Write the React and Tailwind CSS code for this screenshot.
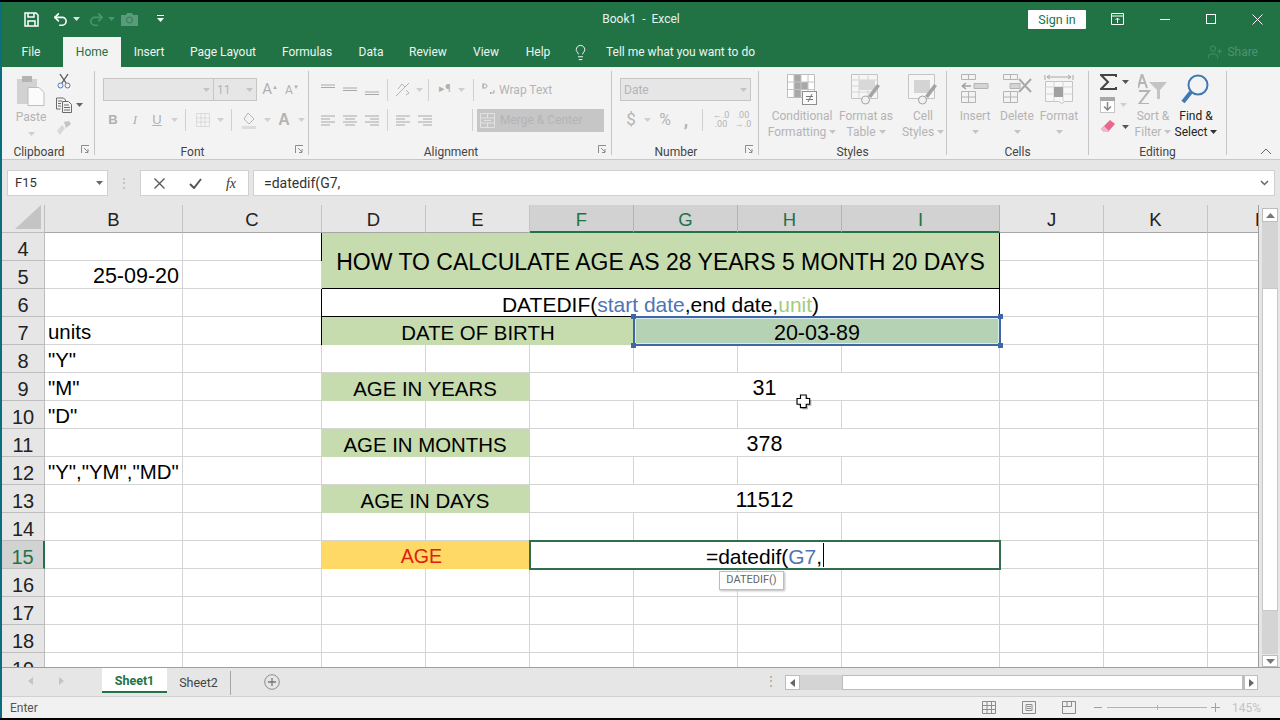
import React from "react";
import { Undo2, Redo2, Lightbulb, UserPlus } from "lucide-react";

const UI = "font-['Roboto',sans-serif]";

const Caret = ({ c = "#b9b9b9" }) => (
  <svg width="7" height="4" viewBox="0 0 7 4" className="shrink-0"><path d="M0 0h7L3.5 4z" fill={c} /></svg>
);

const Launcher = () => (
  <svg width="9" height="9" viewBox="0 0 9 9" className="shrink-0 ml-[5px] mr-[4px] mt-[2px]">
    <path d="M.5 8V.5H8M3 3l4 4M7 4v3.5H4" fill="none" stroke="#8c8c8c" />
  </svg>
);

const Slot = ({ w, children, className = "" }) => (
  <div style={{ width: w }} className={`flex items-center justify-center shrink-0 ${className}`}>{children}</div>
);

const Sep = ({ h = 22 }) => <div style={{ height: h }} className="w-px bg-[#d0d0d0] shrink-0" />;

const Lines = ({ kind, stroke = "#a8a8a8" }) => {
  const rows = {
    top: ["M1 3h14", "M1 5.5h14", "", ""],
    mid: ["M1 6h14", "M1 8.5h14", "", ""],
    bot: ["M1 10h14", "M1 12.5h14", "", ""],
    l: ["M1 3h14", "M1 6h9", "M1 9h14", "M1 12h9"],
    c: ["M1 3h14", "M3 6h10", "M1 9h14", "M3 12h10"],
    r: ["M1 3h14", "M6 6h9", "M1 9h14", "M6 12h9"],
  }[kind];
  return (
    <svg width="16" height="15" viewBox="0 0 16 15">
      {rows.map((d, i) => d && <path key={i} d={d} stroke={stroke} fill="none" />)}
    </svg>
  );
};

function Group({ w, label, launcher, children, border = true }) {
  return (
    <div style={{ width: w }} className={`h-[84px] flex flex-col shrink-0 ${border ? "border-r border-[#c6c6c6]" : ""}`}>
      <div className="h-[72px] flex">{children}</div>
      <div className="h-[12px] flex items-start">
        <span className="flex-1 text-center text-[12px] leading-[18px] text-[#444]">{label}</span>
        {launcher ? <Launcher /> : null}
      </div>
    </div>
  );
}

const BigBtn = ({ w, l1, l2, icon, dark }) => (
  <div style={{ width: w }} className="flex flex-col items-center shrink-0">
    <div className="h-[36px] pt-[3px] flex justify-center">{icon}</div>
    <div className={`mt-[1px] text-[12px] leading-[16px] whitespace-nowrap ${dark ? "text-[#222]" : "text-[#b4b4b4]"}`}>{l1}</div>
    <div className={`text-[12px] leading-[16px] h-[16px] flex items-center gap-[3px] whitespace-nowrap ${dark ? "text-[#222]" : "text-[#b4b4b4]"}`}>
      {l2}<Caret c={dark ? "#333" : "#c4c4c4"} />
    </div>
  </div>
);

const TableBase = ({ children }) => (
  <svg width="30" height="32" viewBox="0 0 30 32">{children}</svg>
);

const CondIcon = () => (
  <TableBase>
    <path d="M.5.5h27v23H.5z" fill="#fff" stroke="#bdbdbd" />
    <path d="M7 1h7v7h7v7h-7v8H7z" fill="#a8a8a8" />
    <path d="M.5 8h27M.5 15.5h27M7 .5v23M14 .5v23M21 .5v23" stroke="#c4c4c4" fill="none" />
    <rect x="15.5" y="17.5" width="14" height="13" fill="#fbfbfb" stroke="#8f8f8f" />
    <path d="M19 22.5h7M19 25.5h7M25 20l-4 8" stroke="#777" fill="none" />
  </TableBase>
);
const FmtTableIcon = () => (
  <TableBase>
    <path d="M.5.5h26v24H.5z" fill="#f6f6f6" stroke="#c4c4c4" />
    <path d="M.5 6h26M.5 12h26M.5 18h26M8 .5v24M17 .5v24" stroke="#d4d4d4" fill="none" />
    <path d="M8 6h16v10H8z" fill="#d8d8d8" />
    <path d="M29 12L20 24l-3-2 9-12z" fill="#a4a4a4" />
    <circle cx="14.5" cy="26" r="4" fill="#f1f1f1" stroke="#a4a4a4" />
  </TableBase>
);
const CellStyleIcon = () => (
  <TableBase>
    <path d="M.5.5h26v24H.5z" fill="#f6f6f6" stroke="#c4c4c4" />
    <path d="M6 6h16v13H6z" fill="#d4d4d4" />
    <path d="M29 12L20 24l-3-2 9-12z" fill="#a4a4a4" />
    <circle cx="14.5" cy="26" r="4" fill="#f1f1f1" stroke="#a4a4a4" />
  </TableBase>
);
const InsertIcon = () => (
  <TableBase>
    <path d="M1.5.5h14v5h-14zM8.5.5v5M1.5 17.5h14v11h-14zM1.5 23h14M8.5 17.5v11" fill="none" stroke="#b4b4b4" />
    <path d="M14 9.5h14v5H14z" fill="#d4d4d4" stroke="#b4b4b4" />
    <path d="M2 12h9M2 12l4-3M2 12l4 3" fill="none" stroke="#a0a0a0" strokeWidth="1.5" />
  </TableBase>
);
const DeleteIcon = () => (
  <TableBase>
    <path d="M1.5.5h14v5h-14zM8.5.5v5M1.5 17.5h14v11h-14zM1.5 23h14M8.5 17.5v11" fill="none" stroke="#b4b4b4" />
    <path d="M8 9.5h10v5H8z" fill="#d4d4d4" stroke="#b4b4b4" />
    <path d="M17 5l12 13M29 5L17 18" fill="none" stroke="#a8a8a8" strokeWidth="2" />
  </TableBase>
);
const FormatIcon = () => (
  <svg width="30" height="32" viewBox="0 0 30 32">
    <path d="M1 1v5M29 1v5M3 3h24M3 3l3-2M3 3l3 2M27 3l-3-2M27 3l-3 2" stroke="#a8a8a8" fill="none" />
    <path d="M1.5 7.5h27v20h-8l-2 2-4-2h-13z" fill="#f7f7f7" stroke="#c4c4c4" />
    <path d="M1.5 13h27M1.5 20h27M10 7.5v20M19 7.5v20" stroke="#d4d4d4" fill="none" />
    <rect x="10" y="13" width="9" height="10" fill="#a0a0a0" />
  </svg>
);

const Sheet = () => {
  const g = "border-r border-b border-[#d4d4d4]";
  const txt = "flex items-center pt-[4px] whitespace-nowrap overflow-visible text-black";
  const T = "text-[20.4px]";
  const N = "text-[21.5px]";
  const hCell = (n) => (
    <div key={"h" + n} className={`flex items-center justify-center pt-[4px] border-r border-b text-[20px] ${n === 15 ? "bg-[#d2d2d2] text-[#217346] border-[#bdbdbd] border-r-[#217346] border-r-2" : "bg-[#e6e6e6] text-[#222] border-[#bdbdbd]"}`}>{n}</div>
  );
  const e = (k) => <div key={k} className={g} />;
  const es = (p, n) => Array.from({ length: n }, (_, i) => e(p + i));
  const B = (k, t, right) => <div key={k} className={`${g} ${txt} ${right ? `justify-end pr-[3px] ${N}` : `pl-[3px] ${T}`}`}>{t}</div>;
  const greenC = "bg-[#c6dbae]";
  const side = (n) => [e("j" + n), e("k" + n), <div key={"l" + n} className="border-b border-[#d4d4d4]" />];
  const labelRow = (n, label, value) => [
    hCell(n), e("b" + n), e("c" + n),
    <div key={"d" + n} className={`col-span-2 ${greenC} ${txt} ${T} justify-center pr-[2px]`}>{label}</div>,
    <div key={"f" + n} className={`col-span-4 ${g} ${txt} ${N} justify-center`}>{value}</div>,
    ...side(n),
  ];
  const heads = ["B", "C", "D", "E", "F", "G", "H", "I", "J", "K"];
  return (
    <div className="relative h-[462px] w-[1256px] overflow-hidden bg-white font-['Liberation_Sans',sans-serif]">
      <div className="grid grid-cols-[43px_138px_139px_104px_104px_104px_104px_104px_158px_104px_104px_50px] auto-rows-[28px]">
        <div className="bg-[#e6e6e6] border-r border-b border-[#bdbdbd] flex items-end justify-end pr-[3px] pb-[3px]">
          <svg width="26" height="24" viewBox="0 0 26 24"><path d="M26 0v24H0z" fill="#c4c4c4" /></svg>
        </div>
        {heads.map((h) => {
          const on = ["F", "G", "H", "I"].includes(h);
          return (
            <div key={h} className={`flex items-center justify-center pt-[3px] text-[18.5px] border-r ${on ? "bg-[#d2d2d2] text-[#217346] border-[#b4b4b4] border-b-2 border-b-[#217346]" : "bg-[#e6e6e6] text-[#222] border-[#c4c4c4] border-b border-b-[#a6a6a6]"}`}>{h}</div>
          );
        })}
        <div className="bg-[#e6e6e6] border-b border-[#a6a6a6] text-[18.5px] pl-[47px] pt-[3px] overflow-hidden flex items-center text-[#222]">L</div>

        {hCell(4)}{e("b4")}{e("c4")}
        <div className={`col-span-6 row-span-2 ml-[-1px] ${greenC} border-l border-r border-b border-black text-[23px] pt-[4px] flex items-center justify-center whitespace-nowrap text-black`}>HOW TO CALCULATE AGE AS 28 YEARS 5 MONTH 20 DAYS</div>
        {side(4)}
        {hCell(5)}
        {B("b5", "25-09-20", true)}{e("c5")}{side(5)}

        {hCell(6)}{e("b6")}{e("c6")}
        <div className={`col-span-6 ml-[-1px] border-l border-r border-b border-black ${txt} text-[21px] justify-center`}>
          DATEDIF(<span className="text-[#4f74b3]">start date</span>,end date,<span className="text-[#a4cc7a]">unit</span>)
        </div>
        {side(6)}

        {hCell(7)}{B("b7", "units")}{e("c7")}
        <div className={`col-span-3 ml-[-1px] border-l border-black ${greenC} ${txt} ${T} justify-center`}>DATE OF BIRTH</div>
        <div className={`relative col-span-3 bg-[#b5d2b4] ${txt} ${N} justify-center`}>
          20-03-89
          <div className="absolute inset-[-1px] border-2 border-[#3f67a8] shadow-[inset_0_0_0_1px_#d8ecec]" />
          <div className="absolute left-[-3px] top-[-3px] w-[5px] h-[5px] bg-[#3f67a8]" />
          <div className="absolute right-[-3px] top-[-3px] w-[5px] h-[5px] bg-[#3f67a8]" />
          <div className="absolute left-[-3px] bottom-[-3px] w-[5px] h-[5px] bg-[#3f67a8]" />
          <div className="absolute right-[-3px] bottom-[-3px] w-[5px] h-[5px] bg-[#3f67a8]" />
        </div>
        {side(7)}

        {hCell(8)}{B("b8", '"Y"')}{es("r8", 7)}{side(8)}
        {labelRow(9, "AGE IN YEARS", "31").map((x, i) => (i === 1 ? B("b9", '"M"') : x))}
        {hCell(10)}{B("b10", '"D"')}{es("r10", 7)}{side(10)}
        {labelRow(11, "AGE IN MONTHS", "378")}
        {hCell(12)}{B("b12", '"Y","YM","MD"')}{es("r12", 7)}{side(12)}
        {labelRow(13, "AGE IN DAYS", "11512")}
        {hCell(14)}{es("r14", 8)}{side(14)}
        {hCell(15)}{e("b15")}{e("c15")}
        <div className="col-span-2 bg-[#ffd966] flex items-center pt-[4px] justify-center pr-[9px] text-[19.6px] text-[#e0200f]">AGE</div>
        <div className={`relative col-span-4 bg-white ${txt} text-[21px] justify-center outline-2 outline-offset-[-1px] outline-[#2f6f4f]`}>
          <span>=datedif(<span className="text-[#4f74b3]">G7</span>,</span>
          <span className="inline-block w-px h-[24px] bg-black ml-[1px] mt-[-4px]" />
          <div className={`absolute left-[189px] top-[30px] h-[19px] w-[65px] bg-white border border-[#bdbdbd] shadow-[1px_1px_2px_#bbb] text-[11px] leading-[15px] text-center text-[#666] ${UI}`}>DATEDIF()</div>
        </div>
        {side(15)}
        {hCell(16)}{es("r16", 8)}{side(16)}
        {hCell(17)}{es("r17", 8)}{side(17)}
        {hCell(18)}{es("r18", 8)}{side(18)}
        {hCell(19)}{es("r19", 8)}{side(19)}
      </div>
      <svg width="23" height="23" viewBox="0 0 20 20" className="absolute left-[791px] top-[186px]">
        <path d="M6.5 3.5h5v3h3v5h-3v3h-5v-3h-3v-5h3z" fill="#000" opacity=".25" transform="translate(1.5 1.5)" />
        <path d="M6.5 3.5h5v3h3v5h-3v3h-5v-3h-3v-5h3z" fill="#fff" stroke="#000" />
      </svg>
    </div>
  );
};

export default function App() {
  return (
    <div className={`w-[1280px] h-[720px] bg-black py-[2px] overflow-hidden ${UI}`}>
      <div className="h-[716px] border-l-2 border-[#0b6e7f] bg-[#e6e6e6] flex flex-col">
        {/* title bar */}
        <div className="h-[34px] bg-[#217346] flex items-center text-white shrink-0">
          <Slot w={58}>
            <svg width="15" height="15" viewBox="0 0 15 15">
              <path d="M1 1h11l2 2v11H1z" fill="none" stroke="#fff" strokeWidth="1.5" />
              <path d="M4 1v4h6V1M4 14V9h7v5" fill="none" stroke="#fff" strokeWidth="1.5" />
            </svg>
          </Slot>
          <Undo2 size={17} strokeWidth={2.2} className="ml-[-8px]" />
          <Slot w={14}><Caret c="#d6e8dc" /></Slot>
          <Redo2 size={17} strokeWidth={2.2} color="#4d9470" className="ml-[5px]" />
          <Slot w={13}><Caret c="#4d9470" /></Slot>
          <svg width="17" height="14" viewBox="0 0 17 14" className="ml-[3px]">
            <path d="M0 3h5l1-2h5l1 2h5v11H0z" fill="#5a9c7a" />
            <circle cx="8.5" cy="8" r="3" fill="none" stroke="#2f7d56" />
          </svg>
          <svg width="7" height="8" viewBox="0 0 7 8" className="ml-[19px]"><path d="M0 3h7l-3.5 4z" fill="#fff" /><path d="M0 .5h7" stroke="#fff" /></svg>
          <div className="flex-1 text-center text-[12px] pl-[90px] text-[#e9f2ec] whitespace-pre">Book1  -  Excel</div>
          <div className="w-[58px] h-[19px] bg-white text-[#217346] text-[12.5px] leading-[19px] text-center rounded-[1px] mr-[19px]">Sign in</div>
          <Slot w={24}>
            <svg width="13" height="12" viewBox="0 0 13 12"><path d="M.5 .5h12v11H.5zM.5 3h12M6.5 10V5M4.5 7l2-2 2 2" fill="none" stroke="#fff" /></svg>
          </Slot>
          <Slot w={46} className="ml-[13px]"><div className="w-[10px] h-px bg-white" /></Slot>
          <Slot w={46}><div className="w-[10px] h-[10px] border border-white" /></Slot>
          <Slot w={46}>
            <svg width="11" height="11" viewBox="0 0 11 11"><path d="M.5.5l10 10M10.5.5l-10 10" stroke="#fff" /></svg>
          </Slot>
        </div>
        {/* tabs */}
        <div className="h-[31px] bg-[#217346] flex items-end text-[12px] text-[#eef5f0] shrink-0 relative">
          <div className="h-[30px] w-[61px] flex items-center justify-center pr-[3px]">File</div>
          <div className="h-[30px] w-[58px] bg-[#f3f3f3] text-[#217346] flex items-center justify-center">Home</div>
          {[["Insert", 56], ["Page Layout", 92], ["Formulas", 76], ["Data", 52], ["Review", 62], ["View", 54], ["Help", 50]].map(([t, w]) => (
            <div key={t} style={{ width: w }} className="h-[30px] flex items-center justify-center whitespace-nowrap">{t}</div>
          ))}
          <div className="h-[30px] flex items-center ml-[9px]">
            <Lightbulb size={17} strokeWidth={1.3} color="#fff" />
            <span className="ml-[17px] whitespace-nowrap">Tell me what you want to do</span>
          </div>
          <div className="h-[30px] flex items-center ml-auto mr-[22px] text-[#4d9470]">
            <UserPlus size={16} strokeWidth={1.2} color="#4d9470" />
            <span className="ml-[4px]">Share</span>
          </div>
        </div>
        {/* ribbon */}
        <div className="h-[92px] bg-[#f3f3f3] flex pt-[4px] shrink-0 relative">
          <Group w={93} label="Clipboard" launcher>
            <div className="w-[50px] flex flex-col items-center pl-[8px]">
              <svg width="28" height="31" viewBox="0 0 28 31" className="mt-[4px]">
                <rect x="0" y="4" width="20" height="25" fill="#d2d2d2" />
                <rect x="5" y="1" width="10" height="6" fill="#b4b4b4" />
                <path d="M11 12.5h11l5 5v13H11z" fill="#fbfbfb" stroke="#bdbdbd" />
              </svg>
              <div className="text-[12px] leading-[16px] mt-[3px] text-[#b4b4b4]">Paste</div>
              <div className="mt-[7px]"><Caret c="#cfcfcf" /></div>
            </div>
            <div className="flex flex-col pl-[4px]">
              <svg width="16" height="16" viewBox="0 0 16 16" className="mt-[2px]">
                <path d="M4 1l6 9M12 1L6 10" stroke="#555" strokeWidth="1.3" fill="none" />
                <circle cx="4.5" cy="12.5" r="2.5" fill="none" stroke="#5578b8" />
                <circle cx="11.5" cy="12.5" r="2.5" fill="none" stroke="#5578b8" />
              </svg>
              <div className="flex items-center mt-[8px] gap-[4px]">
                <svg width="16" height="16" viewBox="0 0 16 16"><path d="M.5 1h7l2 2v1M.5 1v11h4M6.5 4.5h6l3 3v8h-9zM8 8h5M8 10.5h6M8 13h6M2 4h4M2 6.5h3M2 9h3" fill="none" stroke="#6a6a6a" /></svg>
                <Caret c="#666" />
              </div>
              <svg width="16" height="16" viewBox="0 0 16 16" className="mt-[7px]">
                <path d="M8 2l5-1 2 3-5 4z" fill="#c4c4c4" /><path d="M9 8L6 5 1 11l3 4z" fill="#d8d8d8" />
              </svg>
            </div>
          </Group>

          <Group w={214} label="Font" launcher>
            <div className="flex flex-col pl-[8px] pt-[7px]">
              <div className="flex items-center h-[23px]">
                <div className="w-[111px] h-[23px] bg-[#e6e6e6] border border-[#c6c6c6] flex items-center justify-end pr-[3px]"><Caret c="#c4c4c4" /></div>
                <div className="w-[43px] h-[23px] bg-[#e6e6e6] border border-l-0 border-[#c6c6c6] flex items-center justify-between px-[3px] text-[12px] text-[#b4b4b4]">11<Caret c="#c4c4c4" /></div>
                <Slot w={24} className="ml-[1px] text-[15px] text-[#b0b0b0]">A<sup className="text-[6px]">▲</sup></Slot>
                <Slot w={20} className="text-[12px] text-[#b0b0b0]">A<sup className="text-[6px]">▼</sup></Slot>
              </div>
              <div className="flex items-center h-[24px] mt-[7px] font-['Liberation_Sans',sans-serif] text-[#b0b0b0]">
                <Slot w={22} className="ml-[-1px] text-[13px] font-bold">B</Slot>
                <Slot w={22} className="text-[13px] italic font-['Liberation_Serif',serif]">I</Slot>
                <Slot w={22} className="text-[13px] underline">U</Slot>
                <Slot w={12}><Caret c="#cfcfcf" /></Slot>
                <Slot w={10}><Sep /></Slot>
                <Slot w={26}>
                  <svg width="14" height="14" viewBox="0 0 14 14"><path d="M.5.5h13v13H.5zM5 .5v13M9 .5v13M.5 5h13M.5 9h13" fill="none" stroke="#c4c4c4" strokeDasharray="1 1" /></svg>
                </Slot>
                <Slot w={8}><Caret c="#cfcfcf" /></Slot>
                <Slot w={14}><Sep /></Slot>
                <Slot w={24}>
                  <svg width="16" height="17" viewBox="0 0 16 17"><path d="M6 1l6 6-5 5-5-5z" fill="none" stroke="#b4b4b4" /><rect y="14" width="14" height="3" fill="#dcdcdc" /></svg>
                </Slot>
                <Slot w={10}><Caret c="#cfcfcf" /></Slot>
                <Slot w={24} className="text-[16px] font-bold text-[#b4b4b4]">A</Slot>
                <Slot w={10}><Caret c="#cfcfcf" /></Slot>
              </div>
            </div>
          </Group>

          <Group w={303} label="Alignment" launcher>
            <div className="flex flex-col pl-[8px] pt-[10px]">
              <div className="flex items-center h-[17px]">
                <Slot w={22}><Lines kind="top" /></Slot>
                <Slot w={22}><Lines kind="mid" /></Slot>
                <Slot w={22}><Lines kind="bot" /></Slot>
                <Slot w={8}><Sep /></Slot>
                <Slot w={24}>
                  <svg width="16" height="15" viewBox="0 0 16 15"><path d="M1 14L14 1M3 7l4-5 3 3M11 8l3 3-3 2" fill="none" stroke="#b4b4b4" /></svg>
                </Slot>
                <Slot w={8}><Caret c="#cfcfcf" /></Slot>
                <Slot w={10}><Sep /></Slot>
                <Slot w={16} className="ml-[4px] text-[11px] text-[#b0b0b0]">▸¶</Slot>
                <Slot w={16}><Caret c="#cfcfcf" /></Slot>
                <Slot w={8}><Sep h={22} /></Slot>
                <div className="flex items-center ml-[5px] gap-[3px] text-[12px] whitespace-nowrap text-[#b4b4b4] pt-[1px]">
                  <svg width="14" height="16" viewBox="0 0 14 16"><path d="M1 7V1M1 4a2 2 0 1 1 0 .1M9 10l-1 1 1 1M8 11h4V8" fill="none" stroke="#a8a8a8" /></svg>
                  Wrap Text
                </div>
              </div>
              <div className="flex items-center h-[24px] mt-[10px]">
                <Slot w={22}><Lines kind="l" /></Slot>
                <Slot w={22}><Lines kind="c" /></Slot>
                <Slot w={22}><Lines kind="r" /></Slot>
                <Slot w={8}><Sep /></Slot>
                <Slot w={24}><Lines kind="l" /></Slot>
                <Slot w={20}><Lines kind="r" /></Slot>
                <Slot w={38} className="justify-end"><Sep /></Slot>
                <div className="w-[127px] h-[23px] bg-[#c6c6c6] flex items-center pl-[3px] gap-[5px] text-[12px] text-[#b4b4b4] whitespace-nowrap ml-[4px]">
                  <svg width="15" height="15" viewBox="0 0 15 15"><path d="M.5.5h14v14H.5zM.5 5h14M.5 10h14M7.5.5V5M7.5 10v5M4 7.5h7" fill="none" stroke="#e2e2e2" /></svg>
                  Merge &amp; Center
                </div>
              </div>
            </div>
          </Group>

          <Group w={147} label="Number" launcher>
            <div className="flex flex-col pl-[8px] pt-[7px]">
              <div className="w-[131px] h-[23px] bg-[#e6e6e6] border border-[#c6c6c6] flex items-center justify-between px-[3px] text-[12px] text-[#b4b4b4]">Date<Caret c="#c4c4c4" /></div>
              <div className="flex items-center h-[24px] mt-[7px] text-[#b4b4b4]">
                <Slot w={22} className="text-[17px]">$</Slot>
                <Slot w={10}><Caret c="#cfcfcf" /></Slot>
                <Slot w={26} className="text-[16px]">%</Slot>
                <Slot w={16} className="text-[18px] font-bold leading-[10px]">,</Slot>
                <Slot w={16}><Sep /></Slot>
                <Slot w={22}><div className="text-[9px] leading-[9px] text-center whitespace-nowrap">←.0<br />.00</div></Slot>
                <Slot w={22}><div className="text-[9px] leading-[9px] text-center whitespace-nowrap">.00<br />→.0</div></Slot>
              </div>
            </div>
          </Group>

          <Group w={188} label="Styles">
            <BigBtn w={86} l1="Conditional" l2="Formatting" icon={<CondIcon />} />
            <div className="ml-[-10px]"><BigBtn w={62} l1="Format as" l2="Table" icon={<FmtTableIcon />} /></div>
            <BigBtn w={52} l1="Cell" l2="Styles" icon={<CellStyleIcon />} />
          </Group>

          <Group w={142} label="Cells">
            <div className="pl-[7px] flex">
              <BigBtn w={42} l1="Insert" l2="" icon={<InsertIcon />} />
              <BigBtn w={42} l1="Delete" l2="" icon={<DeleteIcon />} />
              <BigBtn w={42} l1="Format" l2="" icon={<FormatIcon />} />
            </div>
          </Group>

          <Group w={138} label="Editing">
            <div className="flex flex-col pl-[11px] pt-[3px] w-[44px]">
              <div className="flex items-center gap-[5px]">
                <svg width="17" height="16" viewBox="0 0 17 16"><path d="M16 3V1H1l7 7-7 7h15v-2" fill="none" stroke="#444" strokeWidth="2" /></svg>
                <Caret c="#555" />
              </div>
              <div className="flex items-center gap-[5px] mt-[7px]">
                <svg width="15" height="16" viewBox="0 0 15 16"><rect x=".5" y=".5" width="14" height="15" fill="#fff" stroke="#c4c4c4" /><rect width="15" height="4" fill="#a8a8a8" /><path d="M7.5 5v8M4 9.5l3.5 3.5L11 9.5" fill="none" stroke="#888" strokeWidth="1.5" /></svg>
                <Caret c="#cfcfcf" />
              </div>
              <div className="flex items-center gap-[5px] mt-[7px]">
                <svg width="17" height="14" viewBox="0 0 17 14"><path d="M10 0l5 4-7 8H4L1 9z" fill="#e8688a" /><path d="M1 9l3 3h4l1-1-5-5z" fill="#f4b8c8" /></svg>
                <Caret c="#555" />
              </div>
            </div>
            <BigBtn w={40} l1="Sort &" l2="Filter" icon={
              <svg width="30" height="30" viewBox="0 0 30 30"><path d="M4 0l5 14M4 0l-4 14M2 9h5M1 17h10L1 30h10" fill="none" stroke="#b4b4b4" strokeWidth="2" /><path d="M11 8h18l-7 8v9h-3v-9z" fill="#c4c4c4" /></svg>
            } />
            <BigBtn w={46} l1="Find &" l2="Select" dark icon={
              <svg width="30" height="31" viewBox="0 0 30 31"><circle cx="17" cy="11" r="9.5" fill="none" stroke="#3f79b5" strokeWidth="2" /><path d="M10 18L2 28" stroke="#3f79b5" strokeWidth="4" /></svg>
            } />
          </Group>
          <svg width="12" height="7" viewBox="0 0 12 7" className="absolute left-[1258px] top-[81px]"><path d="M1 6l5-5 5 5" fill="none" stroke="#666" /></svg>
        </div>
        {/* formula bar */}
        <div className="h-[46px] bg-[#e6e6e6] border-t border-[#c8c8c8] flex items-start pt-[10px] pl-[5px] shrink-0">
          <div className="w-[101px] h-[26px] bg-white border border-[#d0d0d0] flex items-center justify-between pl-[7px] pr-[4px] text-[13px] text-[#333]">F15<Caret c="#666" /></div>
          <Slot w={32} className="h-[26px] text-[#b4b4b4] text-[12px] tracking-tight">⋮</Slot>
          <div className="w-[109px] h-[26px] bg-white border border-[#d0d0d0] flex items-center">
            <Slot w={36}><svg width="11" height="11" viewBox="0 0 11 11"><path d="M.5.5l10 10M10.5.5l-10 10" stroke="#555" strokeWidth="1.3" /></svg></Slot>
            <Slot w={36}><svg width="13" height="11" viewBox="0 0 13 11"><path d="M1 6l4 4 7-9" fill="none" stroke="#555" strokeWidth="2" /></svg></Slot>
            <Slot w={36} className="font-['Liberation_Serif',serif] italic text-[14px] text-[#333]">fx</Slot>
          </div>
          <div className="w-[1022px] h-[26px] ml-[4px] bg-white border border-[#d0d0d0] flex items-center justify-between pl-[10px] pr-[5px] text-[14px] text-[#333]">
            =datedif(G7,
            <svg width="9" height="6" viewBox="0 0 9 6"><path d="M1 1l3.5 3.5L8 1" fill="none" stroke="#666" strokeWidth="1.5" /></svg>
          </div>
        </div>
        {/* body */}
        <div className="h-[462px] flex shrink-0">
          <div className="border-r border-[#9e9e9e]"><Sheet /></div>
          <div className="w-[21px] flex flex-col pl-[3px] pr-[2px] pt-[3px]">
            <div className="h-[14px] bg-white border border-[#bdbdbd] flex items-center justify-center"><svg width="9" height="5" viewBox="0 0 9 5"><path d="M4.5 0L9 5H0z" fill="#777" /></svg></div>
            <div className="h-[66px] bg-[#d4d4d4]" />
            <div className="h-[323px] bg-white border border-[#c8c8c8]" />
            <div className="h-[43px] bg-[#d4d4d4]" />
            <div className="h-[12px] mt-[1px] bg-white border border-[#bdbdbd] flex items-center justify-center"><svg width="9" height="5" viewBox="0 0 9 5"><path d="M0 0h9L4.5 5z" fill="#777" /></svg></div>
          </div>
        </div>
        {/* tabs strip */}
        <div className="h-[29px] border-t border-[#9e9e9e] bg-[#e6e6e6] flex items-start shrink-0">
          <Slot w={57} className="h-[26px]"><svg width="5" height="8" viewBox="0 0 5 8"><path d="M5 0v8L0 4z" fill="#c4c4c4" /></svg></Slot>
          <svg width="5" height="8" viewBox="0 0 5 8" className="mt-[9px]"><path d="M0 0v8l5-4z" fill="#c4c4c4" /></svg>
          <div className="w-[38px]" />
          <div className="w-[65px] h-[25px] bg-white text-[#217346] font-bold text-[12.5px] flex items-center justify-center border-b-2 border-[#217346] pt-[3px]">Sheet1</div>
          <div className="w-[64px] h-[24px] text-[12.5px] text-[#444] flex items-center justify-center border-r border-[#a6a6a6] mt-[3px] mb-0">Sheet2</div>
          <svg width="16" height="16" viewBox="0 0 16 16" className="ml-[33px] mt-[6px]"><circle cx="8" cy="8" r="7.3" fill="none" stroke="#8c8c8c" /><path d="M8 4v8M4 8h8" stroke="#777" strokeWidth="1.3" /></svg>
          <div className="text-[#a0a0a0] text-[12px] ml-[485px] mt-[4px]">⋮</div>
          <div className="ml-[8px] mt-[7px] flex h-[15px]">
            <div className="w-[15px] bg-white border border-[#bdbdbd] flex items-center justify-center"><svg width="5" height="8" viewBox="0 0 5 8"><path d="M5 0v8L0 4z" fill="#666" /></svg></div>
            <div className="w-[42px] bg-[#d4d4d4]" />
            <div className="w-[401px] bg-white border border-[#bdbdbd]" />
            <div className="w-[15px] bg-white border border-[#bdbdbd] border-l-2 flex items-center justify-center"><svg width="5" height="8" viewBox="0 0 5 8"><path d="M0 0v8l5-4z" fill="#666" /></svg></div>
          </div>
        </div>
        {/* status */}
        <div className="h-[22px] bg-[#f1f1f1] border-t border-[#d0d0d0] flex items-center text-[12px] text-[#555] shrink-0">
          <div className="pl-[8px] w-[980px]">Enter</div>
          <svg width="14" height="13" viewBox="0 0 14 13"><path d="M.5.5h13v12H.5zM.5 4.5h13M.5 8.5h13M5 .5v12M9.5.5v12" fill="none" stroke="#8c8c8c" /></svg>
          <svg width="14" height="13" viewBox="0 0 14 13" className="ml-[26px]"><path d="M.5.5h13v12H.5zM4 3.5h6v6H4zM5 5.5h4M5 7.5h4" fill="none" stroke="#8c8c8c" /></svg>
          <svg width="14" height="13" viewBox="0 0 14 13" className="ml-[26px]"><path d="M.5.5h13v12H.5zM5 .5v5M9.5.5v5M.5 5.5h9" fill="none" stroke="#8c8c8c" /></svg>
          <div className="w-[8px] h-px bg-[#a0a0a0] ml-[18px]" />
          <div className="relative w-[100px] h-px bg-[#b4b4b4] ml-[5px]">
            <div className="absolute left-[50px] top-[-2px] w-px h-[5px] bg-[#b4b4b4]" />
          </div>
          <svg width="9" height="9" viewBox="0 0 9 9" className="ml-[4px]"><path d="M4.5 0v9M0 4.5h9" stroke="#a0a0a0" /></svg>
          <span className="ml-[12px] text-[#c4c4c4]">145%</span>
        </div>
      </div>
    </div>
  );
}
